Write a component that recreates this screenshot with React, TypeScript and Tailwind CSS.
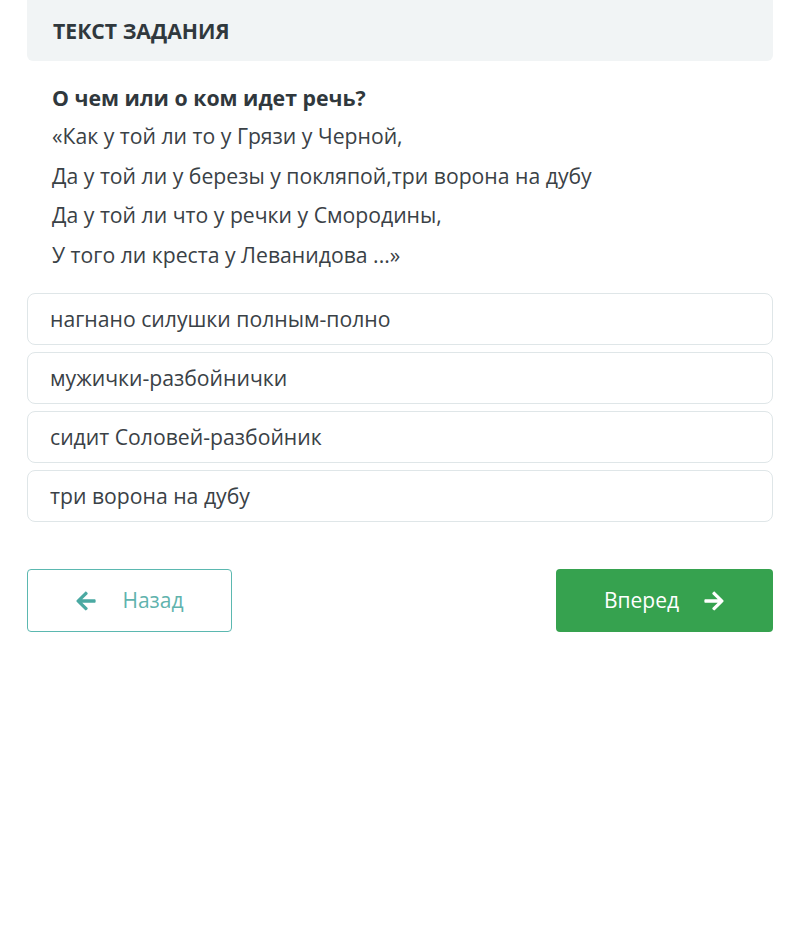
import React from 'react';
import { FaArrowLeft, FaArrowRight } from 'react-icons/fa';

const lines = [
  '«Как у той ли то у Грязи у Черной,',
  'Да у той ли у березы у покляпой,три ворона на дубу',
  'Да у той ли что у речки у Смородины,',
  'У того ли креста у Леванидова ...»',
];

const options = [
  'нагнано силушки полным-полно',
  'мужички-разбойнички',
  'сидит Соловей-разбойник',
  'три ворона на дубу',
];

export default function App() {
  return (
    <div className="w-[800px] h-[938px] bg-white px-[27px] text-[#3a4146]" style={{ fontFamily: '"Open Sans", "Noto Sans", sans-serif' }}>
      <div className="h-[61px] bg-[#f1f4f5] rounded-b-md flex items-center px-[26px]">
        <h1 className="text-[21.2px] font-bold uppercase text-[#30383d]">Текст задания</h1>
      </div>

      <div className="px-[25px] pt-[19px] pb-[19px]">
        <p className="text-[21.3px] font-bold text-[#30383d] leading-[36px]">О чем или о ком идет речь?</p>
        {lines.map((l) => (
          <p key={l} className="text-[21.2px] leading-[39.5px]">{l}</p>
        ))}
      </div>

      <div className="flex flex-col gap-[7px]">
        {options.map((o) => (
          <div key={o} className="h-[52px] border border-[#dfe6e8] rounded-lg flex items-center px-[22px] text-[21.2px]">
            {o}
          </div>
        ))}
      </div>

      <div className="flex justify-between mt-[47px]">
        <button className="w-[205px] h-[63px] border border-[#5bb8b0] rounded flex items-center justify-center gap-[25px] text-[#5fb3ad] text-[21px]">
          <FaArrowLeft className="w-[22px] h-[22px] text-[#4aa9a2]" />
          Назад
        </button>
        <button className="w-[217px] h-[63px] bg-[#36a24f] rounded flex items-center justify-center gap-[24px] text-white text-[21px]">
          Вперед
          <FaArrowRight className="w-[22px] h-[22px]" />
        </button>
      </div>
    </div>
  );
}
